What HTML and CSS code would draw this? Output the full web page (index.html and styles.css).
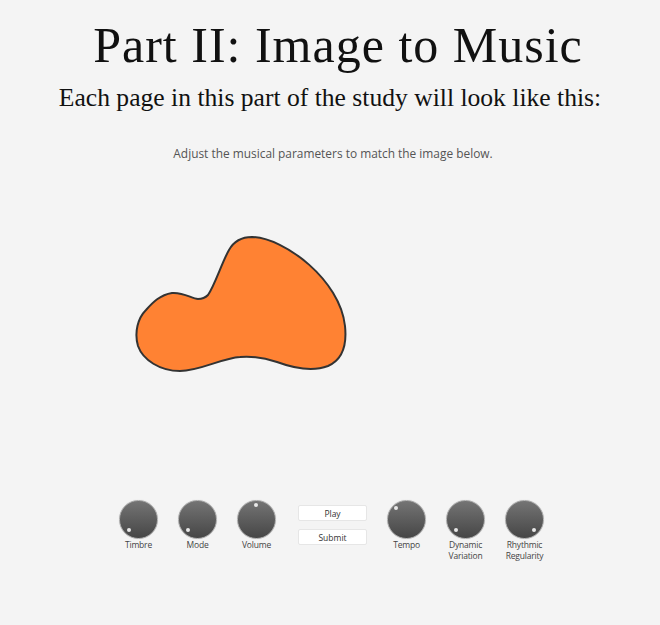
FILE: index.html
```html
<!DOCTYPE html>
<html>
<head>
<meta charset="utf-8">
<link rel="stylesheet" href="styles.css">
</head>
<body>
<div class="page">
  <h1 class="title">Part II: Image to Music</h1>
  <p class="subtitle">Each page in this part of the study will look like this:</p>
  <p class="instruction">Adjust the musical parameters to match the image below.</p>
  <div class="stage">
    <svg class="blob" width="660" height="300" viewBox="0 185 660 300" xmlns="http://www.w3.org/2000/svg">
      <path d="M198 299 C204 299 206 297 208 295 C215 285 222 262 229 250 C234 241 242 237 252 237 C285 238 340 280 345 326 C347 345 342 360 328 366 C315 371 296 369 277 362 C265 358 252 356 240 357 C222 358 200 371 180 371 C160 371 143 360 138 346 C134 332 138 318 146 310 C153 302 160 295 172 293 C184 292 192 299 198 299 Z" fill="#ff8233" stroke="#333" stroke-width="2"/>
    </svg>
  </div>
  <div class="controls">
    <div class="knob-item"><div class="knob"><span class="dot d-bl"></span></div><span class="label">Timbre</span></div>
    <div class="knob-item"><div class="knob"><span class="dot d-bl"></span></div><span class="label">Mode</span></div>
    <div class="knob-item"><div class="knob"><span class="dot d-t"></span></div><span class="label">Volume</span></div>
    <div class="buttons">
      <button class="btn">Play</button>
      <button class="btn">Submit</button>
    </div>
    <div class="knob-item"><div class="knob"><span class="dot d-tl"></span></div><span class="label">Tempo</span></div>
    <div class="knob-item"><div class="knob"><span class="dot d-bl"></span></div><span class="label">Dynamic<br>Variation</span></div>
    <div class="knob-item"><div class="knob"><span class="dot d-br"></span></div><span class="label">Rhythmic<br>Regularity</span></div>
  </div>
</div>
</body>
</html>
```

FILE: styles.css
```css
html, body {
  margin: 0;
  padding: 0;
  background: #f4f4f4;
}
.page {
  width: 660px;
  height: 625px;
  display: flex;
  flex-direction: column;
  align-items: center;
}
.title {
  margin: 15px 0 0;
  padding-left: 16px;
  font-family: "Liberation Serif", serif;
  font-weight: normal;
  font-size: 50px;
  line-height: 60px;
  letter-spacing: 1px;
  color: #111;
}
.subtitle {
  margin: 6px 0 0;
  font-family: "Liberation Serif", serif;
  font-size: 25.6px;
  line-height: 34px;
  color: #111;
}
.instruction {
  margin: 30px 0 0;
  padding-left: 6px;
  font-family: "Open Sans", sans-serif;
  font-size: 11.9px;
  line-height: 16px;
  color: #555;
}
.stage {
  width: 660px;
  height: 300px;
  margin-top: 24px;
}
.blob {
  display: block;
}
.controls {
  display: flex;
  align-items: flex-start;
  margin: 15px 0 0 3px;
}
.knob-item {
  width: 59px;
  display: flex;
  flex-direction: column;
  align-items: center;
}
.knob {
  position: relative;
  width: 37px;
  height: 37px;
  border-radius: 50%;
  background: linear-gradient(#747474, #464646);
  border: 1px solid #a8a8a8;
  box-shadow: 0 0 1px #ccc;
}
.dot {
  position: absolute;
  width: 4px;
  height: 4px;
  border-radius: 50%;
  background: #e8e8e8;
}
.d-bl { left: 7px; top: 27px; }
.d-br { left: 26px; top: 27px; }
.d-t { left: 16px; top: 2px; }
.d-tl { left: 6px; top: 5px; }
.label {
  margin-top: 0;
  font-family: "Open Sans", sans-serif;
  font-size: 8.5px;
  line-height: 11px;
  color: #444;
  text-align: center;
  letter-spacing: -0.2px;
}
.buttons {
  display: flex;
  flex-direction: column;
  gap: 8px;
  margin: 5px 10px 0 12px;
}
.btn {
  width: 69px;
  height: 16px;
  padding: 0;
  border: 1px solid #e6e6e6;
  border-radius: 2px;
  background: #fff;
  font-family: "Open Sans", sans-serif;
  font-size: 8.5px;
  color: #333;
}
```
